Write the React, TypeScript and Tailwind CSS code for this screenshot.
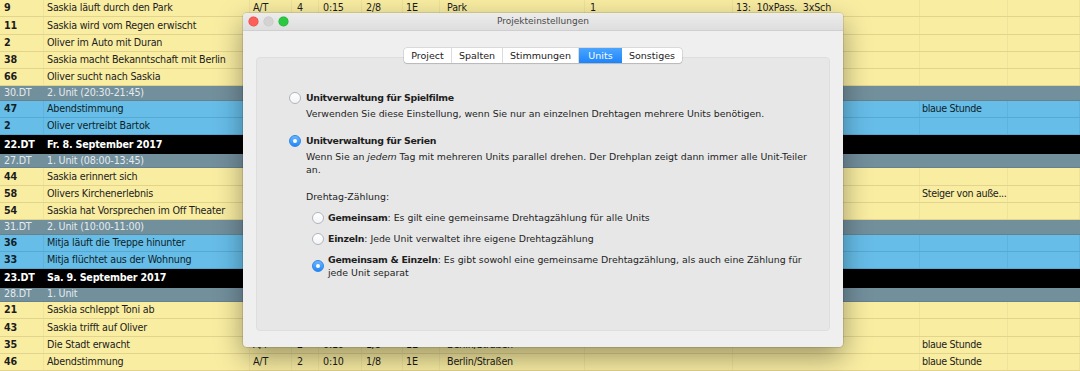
import React from "react";

type RowKind = "n" | "b" | "g" | "k";

interface Row {
  kind: RowKind;
  cells: string[];
}

const rows: Row[] = [
  { kind: "n", cells: ["9", "Saskia läuft durch den Park", "A/T", "4", "0:15", "2/8", "1E", "Park", "1", "13:  10xPass.  3xSch", "", ""] },
  { kind: "n", cells: ["11", "Saskia wird vom Regen erwischt"] },
  { kind: "n", cells: ["2", "Oliver im Auto mit Duran"] },
  { kind: "n", cells: ["38", "Saskia macht Bekanntschaft mit Berlin"] },
  { kind: "n", cells: ["66", "Oliver sucht nach Saskia"] },
  { kind: "g", cells: ["30.DT", "2. Unit (20:30-21:45)"] },
  { kind: "b", cells: ["47", "Abendstimmung", "", "", "", "", "", "", "", "", "blaue Stunde", ""] },
  { kind: "b", cells: ["2", "Oliver vertreibt Bartok"] },
  { kind: "k", cells: ["22.DT", "Fr. 8. September 2017"] },
  { kind: "g", cells: ["27.DT", "1. Unit (08:00-13:45)"] },
  { kind: "n", cells: ["44", "Saskia erinnert sich"] },
  { kind: "n", cells: ["58", "Olivers Kirchenerlebnis", "", "", "", "", "", "", "", "", "Steiger von auße...", ""] },
  { kind: "n", cells: ["54", "Saskia hat Vorsprechen im Off Theater"] },
  { kind: "g", cells: ["31.DT", "2. Unit (10:00-11:00)"] },
  { kind: "b", cells: ["36", "Mitja läuft die Treppe hinunter"] },
  { kind: "b", cells: ["33", "Mitja flüchtet aus der Wohnung"] },
  { kind: "k", cells: ["23.DT", "Sa. 9. September 2017"] },
  { kind: "g", cells: ["28.DT", "1. Unit"] },
  { kind: "n", cells: ["21", "Saskia schleppt Toni ab"] },
  { kind: "n", cells: ["43", "Saskia trifft auf Oliver"] },
  { kind: "n", cells: ["35", "Die Stadt erwacht", "A/T", "2", "0:10", "1/8", "1E", "Berlin/Straßen", "", "", "blaue Stunde", ""] },
  { kind: "n", cells: ["46", "Abendstimmung", "A/T", "2", "0:10", "1/8", "1E", "Berlin/Straßen", "", "", "blaue Stunde", ""] },
  { kind: "n", cells: ["", ""] },
];

const colPad = [
  "pl-[4px]",
  "pl-[3px]",
  "pl-[3px]",
  "pl-[5px]",
  "pl-[4px]",
  "pl-[4px]",
  "pl-[3px]",
  "pl-[7px]",
  "pl-[5px]",
  "pl-[3px]",
  "pl-[2px]",
  "pl-[3px]",
];

const rowStyle: Record<RowKind, string> = {
  n: "h-[17.25px] bg-[#f9eda2] border-b border-[#e2d48c] text-[#1c1c1c]",
  b: "h-[17.25px] bg-[#66bde8] border-b border-[#55a9d3] text-[#0f1f29]",
  g: "h-[14.5px] bg-[#728f9c] border-b border-[#66828e] text-[#e4ebee]",
  k: "h-[18.5px] bg-black text-white font-bold",
};

const cellLine: Record<RowKind, string> = {
  n: "border-r border-[#efe29b]",
  b: "border-r border-[#5db3de]",
  g: "",
  k: "",
};

function TableRow({ row }: { row: Row }) {
  const cells = Array.from({ length: 12 }, (_, i) => row.cells[i] ?? "");
  return (
    <div
      className={`grid grid-cols-[44px_206px_42px_27px_43px_41px_37px_145px_148px_187px_88px_72px] ${rowStyle[row.kind]}`}
    >
      {cells.map((c, i) => (
        <div
          key={i}
          className={`flex items-center whitespace-pre ${colPad[i]} ${cellLine[row.kind]} ${
            i === 0 && (row.kind === "n" || row.kind === "b") ? "font-bold" : ""
          } ${i === 10 ? "tracking-[-0.35px]" : ""}`}
        >
          {c}
        </div>
      ))}
    </div>
  );
}

function Radio({ checked }: { checked?: boolean }) {
  if (checked) {
    return (
      <span className="flex h-[12px] w-[12px] shrink-0 items-center justify-center rounded-full border border-[#2f86e6] bg-gradient-to-b from-[#6ab6fd] to-[#1f86fa]">
        <span className="h-[4px] w-[4px] rounded-full bg-white" />
      </span>
    );
  }
  return (
    <span className="h-[12px] w-[12px] shrink-0 rounded-full border border-[#aeb6c2] bg-gradient-to-b from-white to-[#f4f4f4]" />
  );
}

const tabs = [
  { label: "Project", w: "w-[48px]" },
  { label: "Spalten", w: "w-[51px]" },
  { label: "Stimmungen", w: "w-[76px]" },
  { label: "Units", w: "w-[43px]", active: true },
  { label: "Sonstiges", w: "w-[60px]" },
];

function SettingsDialog() {
  return (
    <div className="absolute left-[243px] top-[13px] flex h-[334px] w-[600px] flex-col overflow-hidden rounded-[4px] bg-[#efefef] font-['DejaVu_Sans',sans-serif] tracking-normal text-[#1e1e1e] shadow-[0_10px_28px_rgba(0,0,0,0.38),0_0_0_1px_rgba(0,0,0,0.1)]">
      {/* title bar */}
      <div className="grid h-[18px] grid-cols-[1fr_auto_1fr] items-center border-b border-[#cfcfcf] bg-gradient-to-b from-[#ececec] to-[#dedede]">
        <div className="flex items-center gap-[6px] pl-[6px]">
          <span className="h-[9px] w-[9px] rounded-full bg-[#fc5f57] ring-[0.5px] ring-[#e0443e]" />
          <span className="h-[9px] w-[9px] rounded-full bg-[#d3d3d3] ring-[0.5px] ring-[#c4c4c4]" />
          <span className="h-[9px] w-[9px] rounded-full bg-[#2bc840] ring-[0.5px] ring-[#1daa2e]" />
        </div>
        <div className="text-[9px] text-[#4a4a4a]">Projekteinstellungen</div>
        <div />
      </div>

      <div className="flex flex-1 flex-col px-[13px] pb-[16px] pt-[17px]">
        {/* tabs */}
        <div className="relative z-10 flex justify-center">
          <div className="flex h-[15px] overflow-hidden rounded-[3px] bg-white text-[9.5px] shadow-[0_0_0_0.5px_rgba(0,0,0,0.18),0_1px_1px_rgba(0,0,0,0.12)]">
            {tabs.map((t, i) => (
              <div
                key={t.label}
                className={`flex items-center justify-center ${t.w} ${
                  t.active
                    ? "bg-gradient-to-b from-[#4aa5fd] to-[#1b84fb] text-white"
                    : "text-[#222]"
                } ${i < tabs.length - 1 && !t.active ? "border-r border-[#dcdcdc]" : ""}`}
              >
                {t.label}
              </div>
            ))}
          </div>
        </div>

        {/* panel */}
        <div className="-mt-[6px] flex-1 rounded-[4px] border border-[#dedede] bg-[#e7e7e7] pl-[32px] pt-[33px] text-[9.4px] leading-[13px]">
          <div className="flex items-center gap-[5px]">
            <Radio />
            <span className="font-bold tracking-[-0.3px]">Unitverwaltung für Spielfilme</span>
          </div>
          <div className="ml-[17px] mt-[3px]">
            Verwenden Sie diese Einstellung, wenn Sie nur an einzelnen Drehtagen mehrere Units benötigen.
          </div>

          <div className="mt-[14px] flex items-center gap-[5px]">
            <Radio checked />
            <span className="font-bold tracking-[-0.3px]">Unitverwaltung für Serien</span>
          </div>
          <div className="ml-[17px] mt-[3px]">
            Wenn Sie an <i>jedem</i> Tag mit mehreren Units parallel drehen. Der Drehplan zeigt dann immer alle Unit-Teiler
            <br />
            an.
          </div>

          <div className="ml-[17px] mt-[14px]">Drehtag-Zählung:</div>

          <div className="ml-[23px] mt-[8px] flex items-center gap-[4px]">
            <Radio />
            <span>
              <b className="tracking-[-0.25px]">Gemeinsam</b>: Es gilt eine gemeinsame Drehtagzählung für alle Units
            </span>
          </div>
          <div className="ml-[23px] mt-[8px] flex items-center gap-[4px]">
            <Radio />
            <span>
              <b className="tracking-[-0.25px]">Einzeln</b>: Jede Unit verwaltet ihre eigene Drehtagzählung
            </span>
          </div>
          <div className="ml-[23px] mt-[8px] flex items-center gap-[4px]">
            <Radio checked />
            <span>
              <b className="tracking-[-0.25px]">Gemeinsam &amp; Einzeln</b>: Es gibt sowohl eine gemeinsame Drehtagzählung, als auch eine Zählung für
              <br />
              jede Unit separat
            </span>
          </div>
        </div>
      </div>
    </div>
  );
}

export default function App() {
  return (
    <div className="relative h-[371px] w-[1080px] overflow-hidden bg-[#f9eda2] font-['DejaVu_Sans',sans-serif] text-[9.6px] leading-none tracking-[-0.2px]">
      <div className="flex flex-col">
        {rows.map((r, i) => (
          <TableRow key={i} row={r} />
        ))}
      </div>
      <SettingsDialog />
    </div>
  );
}
